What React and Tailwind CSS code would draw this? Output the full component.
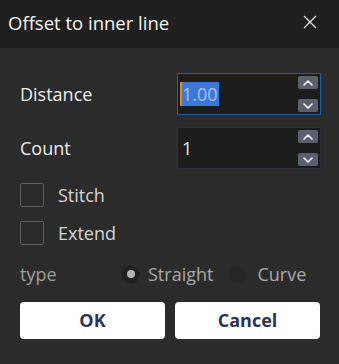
import React from "react";

function Spin({ up }) {
  return (
    <div className="w-[20px] h-[13px] bg-[#5b6070] rounded-[2px] flex items-center justify-center">
      <svg width="10" height="6" viewBox="0 0 10 6" fill="none" stroke="#ffffff" strokeWidth="1.6" strokeLinecap="round" strokeLinejoin="round">
        {up ? <path d="M1 5 L5 1 L9 5" /> : <path d="M1 1 L5 5 L9 1" />}
      </svg>
    </div>
  );
}

function NumInput({ value, focused }) {
  return (
    <div
      className={
        "w-[144px] h-[42px] flex items-center justify-between pl-[2px] pr-[2px] py-[1px] bg-[#1c1c1c] border-[1.5px] " +
        (focused ? "border-[#1f5fb0]" : "border-[#2c2f3a]")
      }
    >
      {focused ? (
        <span className="flex items-center h-[24px] bg-[#3b79d8] text-[#a9c3ea] text-[18px] pr-[1px] border-l-2 border-[#e08a1e]">
          {value}
        </span>
      ) : (
        <span className="text-[#e6e6e6] text-[18px] pl-[2px]">{value}</span>
      )}
      <div className="flex flex-col justify-between h-full py-[1px]">
        <Spin up />
        <Spin />
      </div>
    </div>
  );
}

function Check({ label }) {
  return (
    <div className="flex items-center gap-[14px] h-[24px]">
      <div className="w-[24px] h-[24px] border border-[#5e5e5e] rounded-[2px]" />
      <span className="text-[18px] text-[#d4d4d4]">{label}</span>
    </div>
  );
}

export default function App() {
  return (
    <div
      className="w-[339px] h-[364px] bg-[#2b2b2b] flex flex-col"
      style={{ fontFamily: '"Open Sans", "Noto Sans", sans-serif' }}
    >
      <div className="h-[48px] bg-[#1f1f1f] flex items-center justify-between pl-[8px] pr-[22px]">
        <span className="text-[18.5px] text-[#f2f2f2] mt-[-2px]">Offset to inner line</span>
        <svg width="14" height="14" viewBox="0 0 14 14" stroke="#e0e0e0" strokeWidth="1.4" className="mt-[-4px]">
          <path d="M1 1 L13 13 M13 1 L1 13" />
        </svg>
      </div>
      <div className="flex flex-col pl-[20px] pr-[18px]">
        <div className="flex items-center justify-between mt-[25px]">
          <span className="text-[18px] text-[#ececec]">Distance</span>
          <NumInput value="1.00" focused />
        </div>
        <div className="flex items-center justify-between mt-[12px]">
          <span className="text-[18px] text-[#ececec]">Count</span>
          <NumInput value="1" />
        </div>
        <div className="mt-[14px] flex flex-col gap-[14px]">
          <Check label="Stitch" />
          <Check label="Extend" />
        </div>
        <div className="flex items-center mt-[19px] h-[20px] text-[18px]">
          <span className="text-[#9e9e9e] w-[101px]">type</span>
          <div className="w-[19px] h-[19px] rounded-full bg-[#202020] border border-[#262626] flex items-center justify-center">
            <div className="w-[8px] h-[8px] rounded-full bg-[#b5b5b5]" />
          </div>
          <span className="text-[#a8a8a8] ml-[8px]">Straight</span>
          <div className="w-[19px] h-[19px] rounded-full bg-[#262626] border border-[#2c2c2c] ml-[15px]" />
          <span className="text-[#a8a8a8] ml-[10px]">Curve</span>
        </div>
        <div className="flex gap-[10px] mt-[18px]">
          <button className="w-[145px] h-[37px] bg-white rounded-[4px] text-[18px] font-bold text-[#2b3350]">OK</button>
          <button className="w-[145px] h-[37px] bg-white rounded-[4px] text-[18px] font-bold text-[#2b3350]">Cancel</button>
        </div>
      </div>
    </div>
  );
}
